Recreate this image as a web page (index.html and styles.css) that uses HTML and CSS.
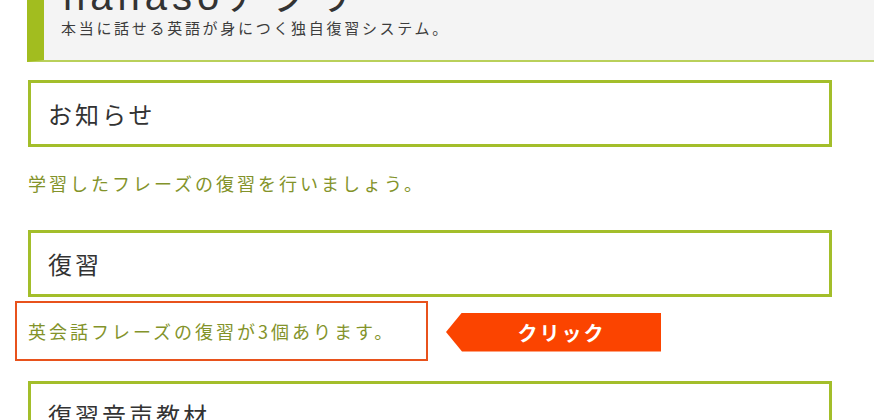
FILE: index.html
```html
<!DOCTYPE html>
<html lang="ja">
  <head>
    <meta charset="UTF-8" />
    <meta name="viewport" content="width=device-width, initial-scale=1.0" />
    <title>nanasoアプリ</title>
    <link rel="stylesheet" href="styles.css">
  </head>
  <body>
    <div class="site-header">
      <h1 class="site-title">nanasoアプリ</h1>
      <p class="site-desc">本当に話せる英語が身につく独自復習システム。</p>
    </div>

    <div class="main">
      <h2 class="section-box box-news">お知らせ</h2>
      <p class="section-text">学習したフレーズの復習を行いましょう。</p>

      <h2 class="section-box box-review">復習</h2>
      <div class="review-row">
        <p class="review-link">英会話フレーズの復習が3個あります。</p>
        <div class="click-tag">クリック</div>
      </div>

      <h2 class="section-box box-audio">復習音声教材</h2>
    </div>
  </body>
</html>
```

FILE: styles.css
```css
body {
  margin: 0;
  font-family: "Noto Sans CJK JP", sans-serif;
  color: #333;
  background: #fff;
  overflow: hidden;
}
.site-header {
  margin-left: 27px;
  height: 60px;
  background-color: #f4f4f4;
  border-left: 17px solid #a2bd1f;
  border-bottom: 2px solid #b9d05a;
  padding-left: 17px;
  overflow: hidden;
}
.site-title {
  margin: -24px 0 0 2px;
  font-family: "Liberation Sans", "Noto Sans CJK JP", sans-serif;
  font-size: 40px;
  line-height: 40px;
  font-weight: normal;
  letter-spacing: 5px;
  color: #333;
}
.site-desc {
  margin: 2px 0 0;
  font-size: 15px;
  line-height: 20px;
  letter-spacing: 2.7px;
  color: #3c3c3c;
}
.main {
  width: 804px;
  margin-left: 28px;
}
.section-box {
  margin: 0;
  height: 61px;
  border: 3px solid #a3be2a;
  padding-left: 17px;
  font-size: 24px;
  line-height: 61px;
  font-weight: normal;
  letter-spacing: 3px;
  color: #333;
}
.box-news {
  margin-top: 18px;
}
.section-text {
  margin: 24px 0 35px;
  font-size: 18px;
  line-height: 24px;
  letter-spacing: 3px;
  color: #83932a;
}
.review-row {
  display: flex;
  align-items: center;
  gap: 18px;
  margin-top: 4px;
}
.review-link {
  margin: 0 0 0 -13px;
  width: 398px;
  height: 56px;
  border: 2px solid #e8521c;
  padding-left: 11px;
  font-size: 18px;
  line-height: 56px;
  letter-spacing: 3px;
  color: #83932a;
}
.click-tag {
  width: 199px;
  height: 39px;
  padding-left: 16px;
  margin-top: 2px;
  background-color: #fb4400;
  clip-path: polygon(16px 0, 100% 0, 100% 100%, 16px 100%, 0 50%);
  color: #fff;
  font-size: 20px;
  font-weight: bold;
  line-height: 39px;
  text-align: center;
  letter-spacing: 2px;
}
.box-audio {
  margin-top: 20px;
}
```
